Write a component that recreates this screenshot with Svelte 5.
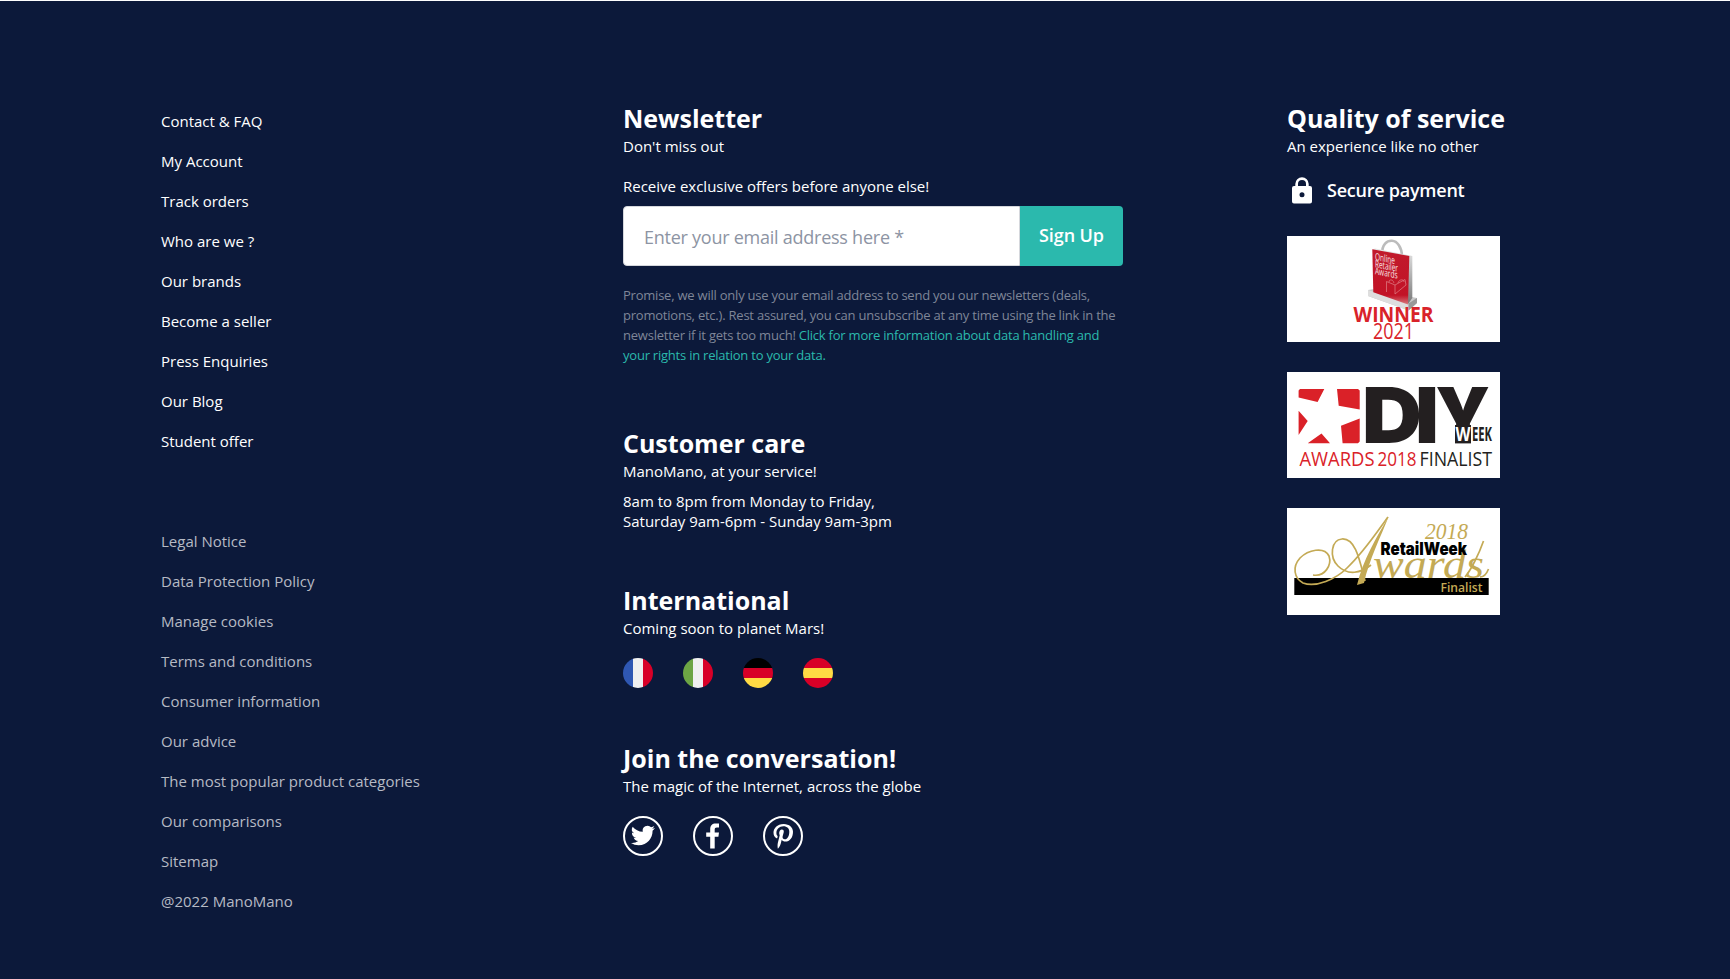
<script>
  const links = ['Contact & FAQ', 'My Account', 'Track orders', 'Who are we ?', 'Our brands', 'Become a seller', 'Press Enquiries', 'Our Blog', 'Student offer'];
  const legal = ['Legal Notice', 'Data Protection Policy', 'Manage cookies', 'Terms and conditions', 'Consumer information', 'Our advice', 'The most popular product categories', 'Our comparisons', 'Sitemap', '@2022 ManoMano'];
</script>

<footer>
  <nav>
    <ul>
      {#each links as l}<li><a href="#top">{l}</a></li>{/each}
    </ul>
    <ul class="legal">
      {#each legal as l}<li><a href="#top">{l}</a></li>{/each}
    </ul>
  </nav>

  <div class="middle">
    <section class="news">
      <h2>Newsletter</h2>
      <p>Don't miss out</p>
      <p class="lead">Receive exclusive offers before anyone else!</p>
      <form>
        <input type="text" placeholder="Enter your email address here *" aria-label="Email" />
        <button type="button">Sign Up</button>
      </form>
      <p class="promise">Promise, we will only use your email address to send you our newsletters (deals,<br />promotions, etc.). Rest assured, you can unsubscribe at any time using the link in the<br />newsletter if it gets too much! <a href="#top">Click for more information about data handling and<br />your rights in relation to your data.</a></p>
    </section>

    <section class="care">
      <h2>Customer care</h2>
      <p>ManoMano, at your service!</p>
      <p class="hours">8am to 8pm from Monday to Friday,<br />Saturday 9am-6pm - Sunday 9am-3pm</p>
    </section>

    <section class="intl">
      <h2>International</h2>
      <p>Coming soon to planet Mars!</p>
      <div class="flags">
        <span class="flag fr"></span>
        <span class="flag it"></span>
        <span class="flag de"></span>
        <span class="flag es"></span>
      </div>
    </section>

    <section>
      <h2>Join the conversation!</h2>
      <p>The magic of the Internet, across the globe</p>
      <div class="social">
        <svg viewBox="0 0 40 40"><circle cx="20" cy="20" r="19" /><path transform="translate(8 7.500)" d="M23.95 4.57a10 10 0 0 1-2.82.77 4.96 4.96 0 0 0 2.16-2.72c-.95.55-2 .95-3.13 1.18a4.92 4.92 0 0 0-8.38 4.48C7.69 8.1 4.07 6.13 1.64 3.16a4.92 4.92 0 0 0 1.52 6.57 4.9 4.9 0 0 1-2.23-.61v.06a4.92 4.92 0 0 0 3.95 4.83 5 5 0 0 1-2.21.08 4.94 4.94 0 0 0 4.6 3.42A9.87 9.87 0 0 1 0 19.54a14 14 0 0 0 7.55 2.21c9.06 0 14-7.5 14-13.98 0-.21 0-.42-.02-.63a9.94 9.94 0 0 0 2.42-2.57z" /></svg>
        <svg viewBox="0 0 40 40"><circle cx="20" cy="20" r="19" /><path d="M17.200 32.500V20.800h-4v-4.300h4v-3.400c0-3.700 2.100-5.700 5.500-5.700h3.300v4h-2.100c-1.700 0-2.200.9-2.200 2.100v3h4.300l-.6 4.300h-3.700v11.700z" /></svg>
        <svg viewBox="0 0 40 40"><circle cx="20" cy="20" r="19" /><path d="M20.700 8c-6.700 0-10.200 4.500-10.200 8.800 0 2.400 1 4.600 3 5.500.4.100.7 0 .8-.4l.3-1.200c.1-.4.1-.5-.2-.9-.6-.7-1-1.600-1-2.900 0-3.700 2.800-6.700 7-6.700 3.800 0 5.900 2.300 5.900 5.500 0 4.100-1.800 7.600-4.500 7.600-1.500 0-2.600-1.200-2.200-2.700.4-1.800 1.200-3.700 1.200-5 0-1.200-.6-2.100-1.900-2.100-1.500 0-2.700 1.600-2.700 3.600 0 1.300.5 2.200.5 2.200l-1.900 7.800c-.5 2.300-.1 5.100 0 5.400 0 .2.200.2.300.1.200-.2 2-2.500 2.600-4.800l1-4c.5 1 2 1.800 3.500 1.800 4.700 0 7.800-4.200 7.800-9.900C30 11.600 26.300 8 20.700 8z" /></svg>
      </div>
    </section>
  </div>

  <aside>
    <h2>Quality of service</h2>
    <p>An experience like no other</p>
    <div class="secure">
      <svg viewBox="0 0 20 27"><path fill-rule="evenodd" d="M3.300 9V7a6.700 6.700 0 0 1 13.400 0v2H18a2 2 0 0 1 2 2v13.500a2 2 0 0 1-2 2H2a2 2 0 0 1-2-2V11a2 2 0 0 1 2-2zM6 9h8V7a4 4 0 0 0-8 0zM10 15.300a2.500 2.500 0 1 0 0 5 2.500 2.500 0 0 0 0-5z" /></svg>
      <span>Secure payment</span>
    </div>
    <div class="awards">
      <svg width="213" height="106" viewBox="0 0 213 106">
        <defs>
          <linearGradient id="side" x1="0" x2="0" y1="0" y2="1"><stop offset="0" stop-color="#e8e8e8" /><stop offset="1" stop-color="#777" /></linearGradient>
          <linearGradient id="front" x1="0" x2="0" y1="0" y2="1"><stop offset="0" stop-color="#c11a2c" /><stop offset=".83" stop-color="#c21326" /><stop offset="1" stop-color="#d77b80" /></linearGradient>
        </defs>
        <path d="M95 18C95 8 100 4.500 105 4.700S115 11 115 21" fill="none" stroke="#bcbcbc" stroke-width="2.600" />
        <path d="M81 54l6-1 38 8 5 1v5l-8.500 7.500L81 60z" fill="#c9c9c9" />
        <path d="M81 54l40.500 13.500v6.700L81 60z" fill="#dedede" />
        <path d="M121.500 67.500l8.500-5.500v5l-8.500 7.500z" fill="#999" />
        <path d="M85.300 13.300l3-.8 37 7.500v42l-4.300 6z" fill="url(#side)" />
        <path d="M85.300 13.300l37 6.700-1.300 48.500-34.700-12.300z" fill="url(#front)" />
        <g class="sans" fill="#f8e2e4" font-size="10" font-weight="500" transform="translate(88 24) skewY(11)">
          <text textLength="20" lengthAdjust="spacingAndGlyphs">Online</text>
          <text y="7.300" textLength="23" lengthAdjust="spacingAndGlyphs">Retailer</text>
          <text y="14.300" textLength="22.500" lengthAdjust="spacingAndGlyphs">Awards</text>
        </g>
        <path d="M99.500 56V45.500l8.500 3.500v9l11-9-1-5.500-10 5.500M102 46c0-3 4-3 5 1M111 47c1-4 6-4 6-1" fill="none" stroke="#df828a" stroke-width=".7" />
        <g class="sans" fill="#d9232a">
          <text x="66.500" y="85.700" font-size="20.500" font-weight="700" textLength="80" lengthAdjust="spacingAndGlyphs">WINNER</text>
          <text x="86" y="103.300" font-size="21" font-weight="500" textLength="41" lengthAdjust="spacingAndGlyphs">2021</text>
        </g>
      </svg>

      <svg width="213" height="106" viewBox="0 0 213 106">
        <path fill="#da2128" d="M13 17h24.300l-6.700 13L11.600 25.500V18.500zM50 17h21l1.700 1.500v19L51.700 33.700zM11.600 38.700L20.700 49l-9.100 14zM34.500 61.500L43 71.300H20.700zM54 53.700L72.700 46.500v23l-1.700 1.800H55.600z" />
        <g fill="#231f20" class="heavy" font-size="76.500" font-weight="900">
          <text x="75" y="71.400" textLength="60" lengthAdjust="spacingAndGlyphs">D</text>
          <text x="128" y="71.400" textLength="24" lengthAdjust="spacingAndGlyphs">I</text>
          <text x="148.500" y="71.400" textLength="54.500" lengthAdjust="spacingAndGlyphs">Y</text>
        </g>
        <path d="M168 53h16v18.400h-16z" fill="#231f20" />
        <g class="sans" font-weight="700" font-size="20">
          <text x="168.500" y="68.800" fill="#fff" textLength="15" lengthAdjust="spacingAndGlyphs">W</text>
          <text x="185" y="68.800" fill="#231f20" textLength="20" lengthAdjust="spacingAndGlyphs">EEK</text>
        </g>
        <g class="sans" font-size="20">
          <text x="12.500" y="94.300" fill="#da2128" textLength="75" lengthAdjust="spacingAndGlyphs">AWARDS</text>
          <text x="90.500" y="94.300" fill="#da2128" textLength="39" lengthAdjust="spacingAndGlyphs">2018</text>
          <text x="132.500" y="94.300" fill="#231f20" textLength="72.500" lengthAdjust="spacingAndGlyphs">FINALIST</text>
        </g>
      </svg>

      <svg width="213" height="107" viewBox="0 0 213 107">
        <path d="M7.300 70h194.400v17H7.300z" />
        <g fill="#c4aa55" class="serif" font-style="italic">
          <text x="138" y="31" font-size="23" textLength="43" lengthAdjust="spacingAndGlyphs">2018</text>
          <text x="86" y="69.500" font-size="41" textLength="111" lengthAdjust="spacingAndGlyphs">wards</text>
        </g>
        <path d="M26 67C38 69 45 57 42 48C37 38 21 42 13 50C5 59 7 70 16 75C29 80 49 71 60 60C77 44 90 24 101 9M78 73C73 54 69 30 55 31C44 32 42 49 51 58C61 68 74 65 84 57M178 69C184 62 192 46 196.500 33M193 69C197 69 200 65 201.500 61" fill="none" stroke="#c4aa55" stroke-width="1.700" />
        <path d="M101.700 8.500C94 28 82 52 77 75l-7 2C76 52 89 30 101.700 8.500z" fill="#c4aa55" />
        <text class="heavy" x="93.500" y="47.300" font-size="17.500" font-weight="900" textLength="86.500" lengthAdjust="spacingAndGlyphs">RetailWeek</text>
        <text class="sans" x="153.500" y="83.800" font-size="13" font-weight="600" fill="#c4aa55" textLength="42" lengthAdjust="spacingAndGlyphs">Finalist</text>
      </svg>
    </div>
  </aside>
</footer>

<style>
  :global(body) { background: #0c193a; }
  footer {
    box-sizing: border-box; height: 979px; border-top: 1px solid #fff; background: #0c193a; color: #fff;
    padding: 100px 0 0 161px; display: grid; grid-template-columns: 462px 664px 1fr;
    font: 15px/20px "Open Sans", sans-serif;
  }
  ul, p, h2 { margin: 0; padding: 0; list-style: none; }
  a { color: inherit; text-decoration: none; }
  li { height: 40px; line-height: 40px; }
  .legal { margin-top: 60px; color: #b6bac4; }
  .middle, aside { padding-top: 2px; }
  h2 { font-size: 25px; line-height: 30px; font-weight: 700; padding-bottom: 3px; }
  .news { height: 325px; }
  .care { height: 157px; }
  .intl { height: 158px; }
  .lead { margin-top: 20px; }
  form { display: flex; width: 500px; height: 60px; margin: 10px 0 19px; }
  input {
    box-sizing: border-box; width: 397px; border: 1px solid #d5d7dc; border-radius: 4px 0 0 4px;
    padding: 2px 20px 0; background: #fff; font: 18px "Open Sans", sans-serif; letter-spacing: -.25px;
  }
  input::placeholder { color: #8d94a3; opacity: 1; }
  button {
    flex: 1; border: 0; border-radius: 0 4px 4px 0; background: #2bb9ad; color: #fff; padding: 0 0 2px;
    font: 600 18px "Open Sans", sans-serif; letter-spacing: -.1px;
  }
  .promise { font-size: 13px; letter-spacing: -.225px; color: #7f8698; white-space: nowrap; }
  .promise a { color: #2bb9ad; }
  .hours { margin-top: 10px; }
  .flags { display: flex; gap: 30px; margin-top: 20px; }
  .flag { width: 30px; height: 30px; border-radius: 50%; }
  .fr { background: linear-gradient(90deg, #2f57b2 0 10px, #f0f0f0 10px 20px, #d80027 20px); }
  .it { background: linear-gradient(90deg, #6da544 0 10px, #f0f0f0 10px 20px, #d80027 20px); }
  .de { background: linear-gradient(#000 0 10px, #d80027 10px 20px, #ffda44 20px); }
  .es { background: linear-gradient(#d80027 0 10px, #ffda44 10px 20px, #d80027 20px); }
  .social { display: flex; gap: 30px; margin-top: 20px; }
  .social svg { width: 40px; height: 40px; fill: #fff; }
  .social circle { fill: none; stroke: #fff; stroke-width: 2; }
  .secure { display: flex; align-items: center; gap: 15px; height: 27px; margin: 21px 0 32px 5px; font-size: 18px; font-weight: 600; letter-spacing: -.24px; }
  .secure svg { width: 20px; height: 27px; fill: #fff; }
  .secure span { padding-bottom: 2px; }
  .awards { display: flex; flex-direction: column; gap: 30px; }
  .awards svg { display: block; background: #fff; }
  .sans { font-family: "Open Sans", sans-serif; }
  .heavy { font-family: Inter, sans-serif; }
  .serif { font-family: "Liberation Serif", serif; }
</style>
